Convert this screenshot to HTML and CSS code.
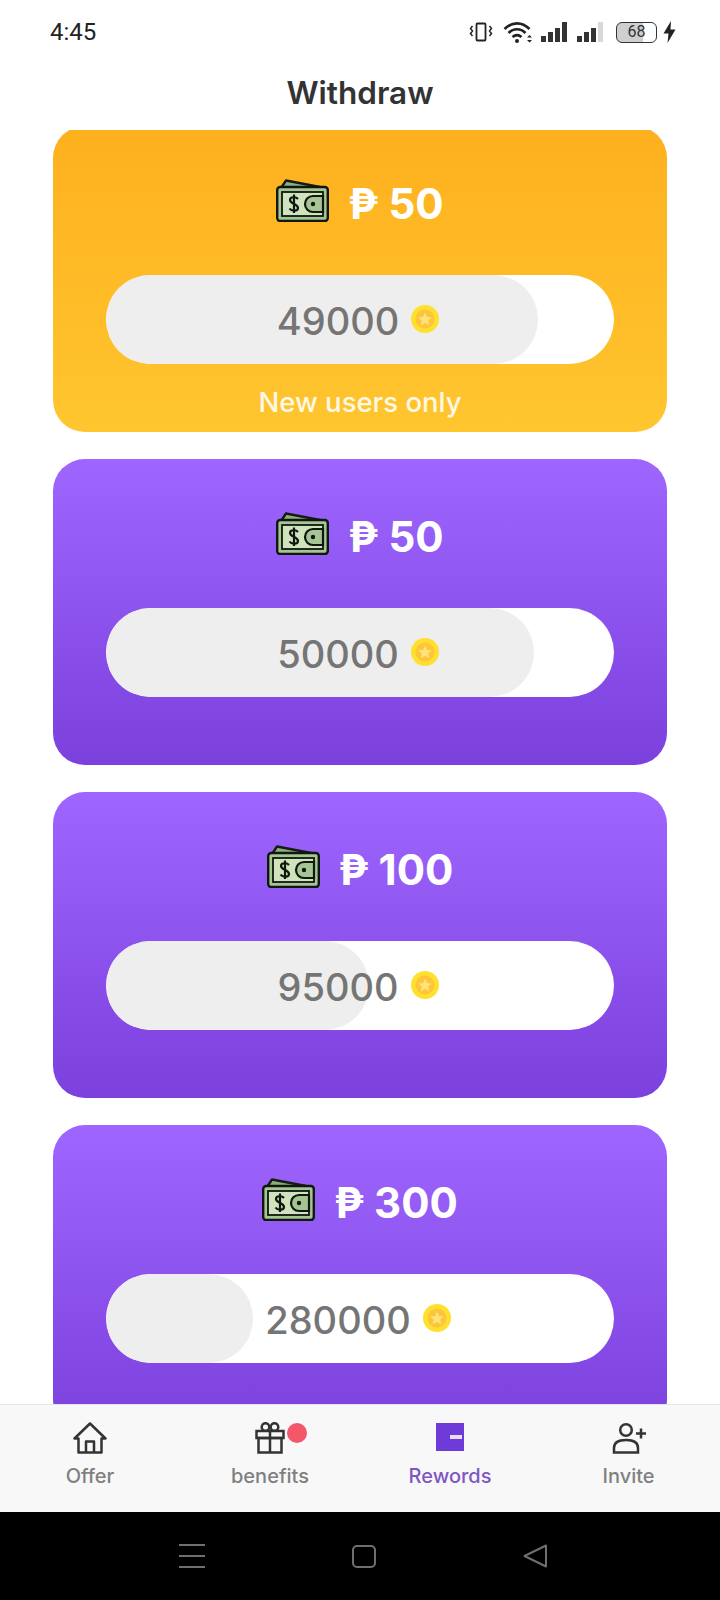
FILE: index.html
```html
<!DOCTYPE html>
<html lang="en">
	<head>
		<meta charset="UTF-8" />
		<meta name="viewport" content="width=device-width, initial-scale=1.0" />
		<title>Withdraw</title>
		<link rel="stylesheet" href="styles.css">
	</head>
	<body>
		<svg class="defs" width="0" height="0">
			<symbol id="wallet" viewBox="0 0 53 43">
				<path d="M5 9 L10 1.500 L44 8 L44 14 L5 14 Z" fill="#8fae80" stroke="#141c14" stroke-width="2.400" stroke-linejoin="round" />
				<rect x="1.200" y="8" width="50.600" height="34" rx="3" fill="#a6c595" stroke="#10170f" stroke-width="2.400" />
				<rect x="6" y="13" width="41" height="24" fill="#cfe3bd" stroke="#10170f" stroke-width="1.800" />
				<path d="M47 17 H37 a6 6 0 0 0 0 16 H47 Z" fill="#a6c595" stroke="#10170f" stroke-width="2.200" />
				<circle cx="37" cy="25" r="2.200" fill="#10170f" />
				<path d="M22 20 C20 17.500 14 17.500 14 21 C14 25 22 24.500 22 29 C22 32.500 15.500 32.500 13.500 29.500 M18 15.500 V34" fill="none" stroke="#10170f" stroke-width="2.200" />
			</symbol>
			<symbol id="coin" viewBox="0 0 28 28">
				<circle cx="14" cy="14" r="14" fill="#ffe02e" />
				<circle cx="14" cy="14" r="9.500" fill="#fdc63a" />
				<path d="M14 7.500 L16 11.900 L20.700 12.400 L17.200 15.600 L18.200 20.300 L14 17.900 L9.800 20.300 L10.800 15.600 L7.300 12.400 L12 11.900 Z" fill="#ffe27a" />
			</symbol>
		</svg>

		<div class="phone">
			<div class="status-bar">
				<span class="time">4:45</span>
				<div class="status-icons">
					<svg width="24" height="24" viewBox="0 0 24 24" fill="none" stroke="#222" stroke-width="1.800">
						<rect x="7.500" y="3.500" width="9" height="17" rx="1" />
						<path d="M3.500 6 L1.500 8.500 L3.500 11 L1.500 13.500 L3.500 16 M20.500 6 L22.500 8.500 L20.500 11 L22.500 13.500 L20.500 16" stroke-width="1.500" />
					</svg>
					<svg class="wifi" width="31" height="24" viewBox="0 0 31 24" fill="none" stroke="#222" stroke-width="2.600">
						<path d="M1.500 9 C9 1.500 19 1.500 26.500 9 M5.500 13 C10.500 8 17.500 8 22.500 13 M9.500 17 C12.500 14.500 15.500 14.500 18.500 17" />
						<circle cx="14" cy="21" r="2" fill="#222" stroke="none" />
						<path d="M24 17.500 L26.500 15 L29 17.500 Z M24 20 L26.500 22.500 L29 20 Z" fill="#222" stroke="none" />
					</svg>
					<div class="signal">
						<i class="bar-1"></i><i class="bar-2"></i><i class="bar-3"></i><i class="bar-4"></i>
					</div>
					<div class="signal signal-second">
						<i class="bar-1"></i><i class="bar-2"></i><i class="bar-3"></i><i class="bar-4 weak"></i>
					</div>
					<div class="battery"><span class="battery-level">68</span></div>
					<svg class="bolt" width="13" height="22" viewBox="0 0 13 22"><path d="M8 0 L0.500 12.500 H5.500 L4.500 22 L12.500 8.500 H7.500 Z" fill="#222" /></svg>
				</div>
			</div>

			<h1 class="title">Withdraw</h1>

			<div class="list">
				<div class="card card-yellow">
					<div class="amount">
						<svg class="wallet" width="53" height="43"><use href="#wallet" /></svg>
						<span>₱ 50</span>
					</div>
					<div class="pill">
						<div class="pill-fill" style="width: 432px"></div>
						<div class="pill-text">49000 <svg width="28" height="28"><use href="#coin" /></svg></div>
					</div>
					<p class="note">New users only</p>
				</div>

				<div class="card">
					<div class="amount">
						<svg class="wallet" width="53" height="43"><use href="#wallet" /></svg>
						<span>₱ 50</span>
					</div>
					<div class="pill">
						<div class="pill-fill" style="width: 428px"></div>
						<div class="pill-text">50000 <svg width="28" height="28"><use href="#coin" /></svg></div>
					</div>
				</div>

				<div class="card">
					<div class="amount">
						<svg class="wallet" width="53" height="43"><use href="#wallet" /></svg>
						<span>₱ 100</span>
					</div>
					<div class="pill">
						<div class="pill-fill" style="width: 263px"></div>
						<div class="pill-text">95000 <svg width="28" height="28"><use href="#coin" /></svg></div>
					</div>
				</div>

				<div class="card">
					<div class="amount">
						<svg class="wallet" width="53" height="43"><use href="#wallet" /></svg>
						<span>₱ 300</span>
					</div>
					<div class="pill">
						<div class="pill-fill" style="width: 147px"></div>
						<div class="pill-text">280000 <svg width="28" height="28"><use href="#coin" /></svg></div>
					</div>
				</div>
			</div>

			<nav class="tabs">
				<div class="tab">
					<svg width="34" height="32" viewBox="0 0 34 32" fill="none" stroke="#333" stroke-width="2.500" stroke-linejoin="round">
						<path d="M1.500 16.500 L17 1.500 L32.500 16.500 H28.500 V30.500 H5.500 V16.500 Z" />
						<path d="M13 30.500 V19.500 H21 V30.500" />
					</svg>
					<span>Offer</span>
				</div>
				<div class="tab">
					<div class="tab-icon">
						<svg width="30" height="32" viewBox="0 0 30 32" fill="none" stroke="#333" stroke-width="2.500">
							<rect x="1.500" y="9" width="27" height="7" />
							<rect x="3.500" y="16" width="23" height="14.500" />
							<path d="M15 9 V30.500" />
							<circle cx="10.500" cy="5" r="3.800" />
							<circle cx="19.500" cy="5" r="3.800" />
						</svg>
						<i class="dot"></i>
					</div>
					<span>benefits</span>
				</div>
				<div class="tab tab-active">
					<div class="rewards-icon"><i></i></div>
					<span>Rewords</span>
				</div>
				<div class="tab tab-invite">
					<svg width="34" height="32" viewBox="0 0 34 32" fill="none" stroke="#333" stroke-width="2.500">
						<circle cx="14" cy="8" r="5.800" />
						<path d="M2 30.500 V26 C2 20.500 7 18 14 18 C21 18 26 20.500 26 26 V30.500 Z" />
						<path d="M24 11.500 H34 M29 6.500 V16.500" />
					</svg>
					<span>Invite</span>
				</div>
			</nav>

			<div class="system-bar">
				<div class="menu-icon"><i></i><i></i><i></i></div>
				<div class="square-icon"></div>
				<svg width="25" height="24" viewBox="0 0 25 24" fill="none" stroke="#6f6f6f" stroke-width="2" stroke-linejoin="round">
					<path d="M1.500 12 L23 1.500 V22.500 Z" />
				</svg>
			</div>
		</div>
	</body>
</html>
```

FILE: styles.css
```css
* {
	margin: 0;
	padding: 0;
	box-sizing: border-box;
	font-family: "Inter", sans-serif;
}

body {
	background-color: white;
	width: 720px;
	height: 1600px;
	overflow: hidden;
}

.defs {
	display: block;
	height: 0;
}

.phone {
	display: flex;
	flex-direction: column;
	height: 1600px;
}

.status-bar {
	display: flex;
	align-items: center;
	justify-content: space-between;
	height: 64px;
	padding: 0 44px 0 50px;
	flex-shrink: 0;
}

.time {
	font-family: "Roboto", sans-serif;
	font-size: 24px;
	color: #222;
}

.status-icons {
	display: flex;
	align-items: center;
	gap: 7px;
}

.wifi {
	margin-left: 3px;
}

.signal {
	display: flex;
	align-items: flex-end;
	gap: 2px;
	height: 20px;
}

.signal-second {
	margin-left: 3px;
}

.signal i {
	display: block;
	width: 5px;
	background-color: #333;
}

.bar-1 {
	height: 6px;
}

.bar-2 {
	height: 10px;
}

.bar-3 {
	height: 14px;
}

.bar-4 {
	height: 20px;
}

.signal .weak {
	background-color: #d8d8d8;
}

.battery {
	width: 41px;
	height: 21px;
	border: 1.500px solid #333;
	border-radius: 6px;
	margin-left: 6px;
	text-align: center;
	background: linear-gradient(90deg, #cfcfcf 66%, white 66%);
}

.battery-level {
	display: block;
	font-family: "Roboto", sans-serif;
	font-size: 16px;
	line-height: 18px;
	color: #333;
}

.bolt {
	margin-left: -1px;
}

.title {
	height: 66px;
	font-size: 31.500px;
	font-weight: 600;
	line-height: 58px;
	text-align: center;
	color: #333;
	flex-shrink: 0;
}

.list {
	flex: 1;
	overflow: hidden;
	display: flex;
	flex-direction: column;
	gap: 27px;
	padding: 0 53px;
}

.card {
	flex-shrink: 0;
	height: 306px;
	border-radius: 32px;
	padding: 50px 53px 0;
	background: linear-gradient(180deg, #9f66ff, #7c40dc);
}

.card-yellow {
	margin-top: -4px;
	background: linear-gradient(180deg, #feb01e, #ffc62f);
}

.amount {
	display: flex;
	align-items: center;
	justify-content: center;
	gap: 19px;
	height: 54px;
	margin-bottom: 45px;
	font-size: 42px;
	font-weight: 700;
	color: white;
}

.wallet {
	margin-top: -5px;
}

.pill {
	position: relative;
	height: 89px;
	border-radius: 45px;
	background-color: white;
	overflow: hidden;
}

.pill-fill {
	position: absolute;
	top: 0;
	left: 0;
	height: 100%;
	border-radius: 45px;
	background-color: #eeeeee;
}

.pill-text {
	position: relative;
	display: flex;
	align-items: center;
	justify-content: center;
	height: 100%;
	padding: 2px 4px 0 0;
	gap: 12px;
	font-size: 38px;
	font-weight: 500;
	color: #757575;
}

.pill-text svg {
	margin-top: -3px;
}

.note {
	margin-top: 21px;
	font-size: 27.500px;
	font-weight: 500;
	line-height: 34px;
	text-align: center;
	color: #fff8e6;
}

.tabs {
	display: grid;
	grid-template-columns: repeat(4, 1fr);
	height: 108px;
	padding-top: 17px;
	border-top: 1px solid #e4e4e4;
	background-color: #f8f8f8;
	flex-shrink: 0;
}

.tab {
	display: flex;
	flex-direction: column;
	align-items: center;
	gap: 7px;
	font-size: 20px;
	font-weight: 500;
	line-height: 30px;
	color: #808080;
}

.tab svg {
	display: block;
}

.tab-active {
	color: #7e57c2;
}

.tab-invite {
	padding-right: 3px;
}

.tab-icon {
	position: relative;
}

.dot {
	position: absolute;
	top: 1px;
	right: -22px;
	width: 20px;
	height: 20px;
	border-radius: 50%;
	background-color: #f4566a;
}

.rewards-icon {
	display: flex;
	align-items: center;
	justify-content: flex-end;
	width: 28px;
	height: 28px;
	margin: 1px 0 3px;
	padding-right: 2px;
	background-color: #6f3bd8;
}

.rewards-icon i {
	display: block;
	width: 12px;
	height: 4px;
	background-color: #e7dcfa;
}

.system-bar {
	display: flex;
	align-items: center;
	justify-content: center;
	gap: 147px;
	height: 88px;
	padding-left: 6px;
	background-color: black;
	flex-shrink: 0;
}

.menu-icon {
	display: flex;
	flex-direction: column;
	gap: 9px;
	width: 26px;
}

.menu-icon i {
	display: block;
	height: 2px;
	background-color: #6f6f6f;
}

.square-icon {
	width: 24px;
	height: 23px;
	border: 2px solid #6f6f6f;
	border-radius: 5px;
}
```
